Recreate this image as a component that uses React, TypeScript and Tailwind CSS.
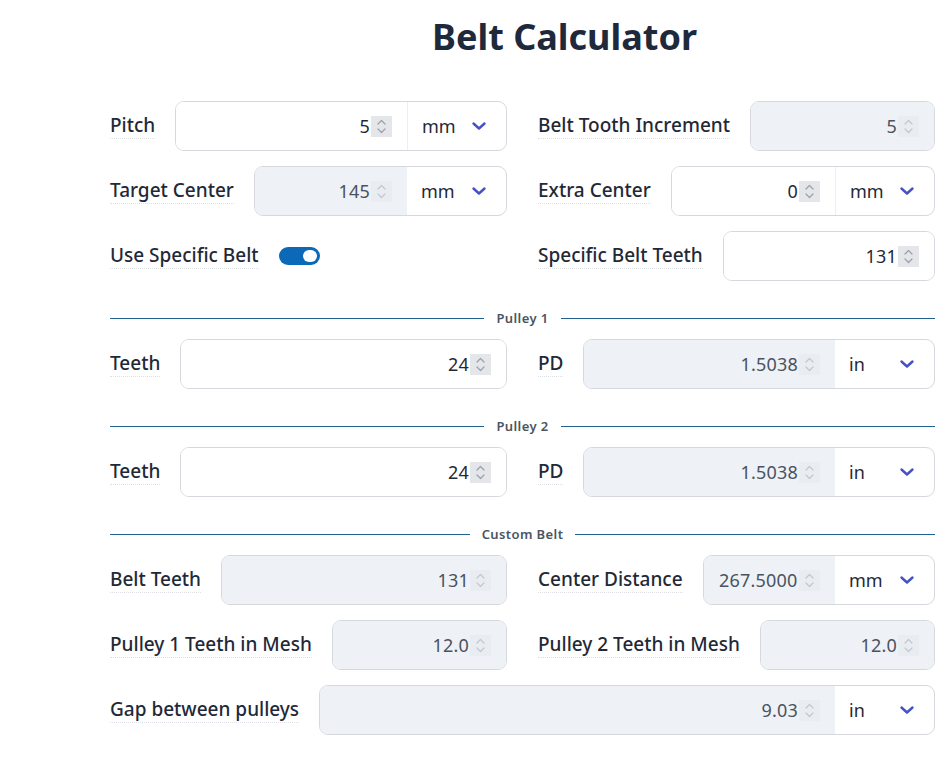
import React from "react";

const Chevron = () => (
  <svg width="16" height="16" viewBox="0 0 16 16" fill="none" className="shrink-0">
    <path d="M2.5 5.5 L8 10.5 L13.5 5.5" stroke="#4551c4" strokeWidth="2.4" strokeLinecap="round" strokeLinejoin="round" />
  </svg>
);

const Spinner = ({ disabled }: { disabled?: boolean }) => (
  <span
    className={
      "ml-[1px] flex h-[21px] w-[21px] shrink-0 items-center justify-center " +
      (disabled ? "bg-[#e9edf2]" : "bg-[#e4e6ea]")
    }
  >
    <svg width="11" height="17" viewBox="0 0 11 17" fill="none">
      <path d="M2 6 L5.5 2.5 L9 6" stroke={disabled ? "#c3c8d0" : "#9aa0a8"} strokeWidth="1.2" strokeLinecap="round" strokeLinejoin="round" />
      <path d="M2 11 L5.5 14.5 L9 11" stroke={disabled ? "#c3c8d0" : "#9aa0a8"} strokeWidth="1.2" strokeLinecap="round" strokeLinejoin="round" />
    </svg>
  </span>
);

const NumberField = ({
  value,
  disabled,
  unit,
  clip,
}: {
  value: string;
  disabled?: boolean;
  unit?: string;
  clip?: boolean;
}) => (
  <div className="flex h-[50px] min-w-0 flex-1 overflow-hidden rounded-[9px] border border-[#d5d9de] bg-white">
    <div
      className={
        "flex min-w-0 flex-1 items-center justify-end pr-[15px] " +
        (disabled ? "bg-[#eef1f5] text-[#4a5361]" : "bg-white text-[#1f2937]")
      }
    >
      <span className={"overflow-hidden whitespace-nowrap text-[18px] tracking-[0.2px] " + (clip ? "w-[79px]" : "")}>{value}</span>
      <Spinner disabled={disabled} />
    </div>
    {unit && (
      <div
        className={
          "flex w-[99px] shrink-0 items-center justify-between pl-[14px] pr-[19px] text-[18px] text-[#1f2937] " +
          (disabled ? "" : "border-l border-[#eceef1]")
        }
      >
        <span>{unit}</span>
        <Chevron />
      </div>
    )}
  </div>
);

const Label = ({ children }: { children: React.ReactNode }) => (
  <span className="shrink-0 whitespace-nowrap border-b border-dotted border-[#dde1e6] pb-[1px] text-[19px] font-medium leading-[24px] text-[#1f2937]">
    {children}
  </span>
);

const Field = ({ label, children }: { label: string; children: React.ReactNode }) => (
  <div className="flex h-[50px] items-center gap-[20px]">
    <Label>{label}</Label>
    {children}
  </div>
);

const Divider = ({ title }: { title: string }) => (
  <div className="mb-[21px] mt-[37px] flex h-0 items-center gap-[12px]">
    <div className="h-px flex-1 bg-[#22628f]" />
    <span className="text-[13px] font-semibold leading-none tracking-[0.4px] text-[#4b5563]">{title}</span>
    <div className="h-px flex-1 bg-[#22628f]" />
  </div>
);

export default function App() {
  return (
    <div
      className="min-h-screen bg-white pl-[110px] pr-[15px]"
      style={{ fontFamily: '"Noto Sans", Inter, sans-serif' }}
    >
      <h1 className="pl-[322px] pt-[13px] text-[36px] font-bold leading-[48px] text-[#1e293b]">Belt Calculator</h1>
      <div className="mt-[40px] grid w-[825px] grid-cols-2 gap-x-[31px] gap-y-[15px]">
        <Field label="Pitch">
          <NumberField value="5" unit="mm" />
        </Field>
        <Field label="Belt Tooth Increment">
          <NumberField value="5" disabled />
        </Field>
        <Field label="Target Center">
          <NumberField value="145" unit="mm" disabled />
        </Field>
        <Field label="Extra Center">
          <NumberField value="0" unit="mm" />
        </Field>
        <Field label="Use Specific Belt">
          <div className="flex h-[18px] w-[41px] items-center justify-end rounded-full bg-[#0b69b7] pr-[3px]">
            <div className="h-[12px] w-[14px] rounded-full bg-white" />
          </div>
        </Field>
        <Field label="Specific Belt Teeth">
          <NumberField value="131" />
        </Field>
      </div>
      <div className="w-[825px]">
        <Divider title="Pulley 1" />
        <div className="grid grid-cols-2 gap-x-[31px]">
          <Field label="Teeth">
            <NumberField value="24" />
          </Field>
          <Field label="PD">
            <NumberField value="1.5038" unit="in" disabled />
          </Field>
        </div>
        <Divider title="Pulley 2" />
        <div className="grid grid-cols-2 gap-x-[31px]">
          <Field label="Teeth">
            <NumberField value="24" />
          </Field>
          <Field label="PD">
            <NumberField value="1.5038" unit="in" disabled />
          </Field>
        </div>
        <Divider title="Custom Belt" />
        <div className="grid grid-cols-2 gap-x-[31px] gap-y-[15px]">
          <Field label="Belt Teeth">
            <NumberField value="131" disabled />
          </Field>
          <Field label="Center Distance">
            <NumberField value="267.50000" unit="mm" disabled clip />
          </Field>
          <Field label="Pulley 1 Teeth in Mesh">
            <NumberField value="12.0" disabled />
          </Field>
          <Field label="Pulley 2 Teeth in Mesh">
            <NumberField value="12.0" disabled />
          </Field>
          <div className="col-span-2">
            <Field label="Gap between pulleys">
              <NumberField value="9.03" unit="in" disabled />
            </Field>
          </div>
        </div>
      </div>
    </div>
  );
}
